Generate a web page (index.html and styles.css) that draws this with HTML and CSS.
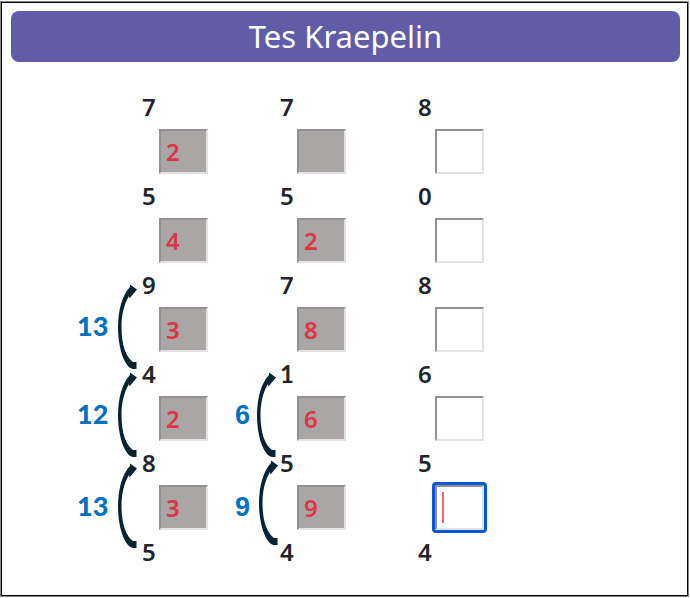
FILE: index.html
```
<!DOCTYPE html>
<html lang="id">
<head>
<meta charset="utf-8">
<title>Tes Kraepelin</title>
<link rel="stylesheet" href="styles.css">
</head>
<body>
<main class="frame">
  <h1 class="banner">Tes Kraepelin</h1>
  <form class="board">
    <div class="column">
      <span class="number">7</span><input class="answer filled" aria-label="7 + 5" value="2">
      <span class="number">5</span><input class="answer filled" aria-label="5 + 9" value="4">
      <span class="number">9</span><input class="answer filled" aria-label="9 + 4" value="3">
      <span class="number">4</span><input class="answer filled" aria-label="4 + 8" value="2">
      <span class="number">8</span><input class="answer filled" aria-label="8 + 5" value="3">
      <span class="number">5</span>
    </div>
    <div class="column">
      <span class="number">7</span><input class="answer filled" aria-label="7 + 5" value="">
      <span class="number">5</span><input class="answer filled" aria-label="5 + 7" value="2">
      <span class="number">7</span><input class="answer filled" aria-label="7 + 1" value="8">
      <span class="number one">1</span><input class="answer filled" aria-label="1 + 5" value="6">
      <span class="number">5</span><input class="answer filled" aria-label="5 + 4" value="9">
      <span class="number">4</span>
    </div>
    <div class="column">
      <span class="number">8</span><input class="answer" aria-label="8 + 0">
      <span class="number">0</span><input class="answer" aria-label="0 + 8">
      <span class="number">8</span><input class="answer" aria-label="8 + 6">
      <span class="number">6</span><input class="answer" aria-label="6 + 5">
      <span class="number">5</span><input class="answer active" aria-label="5 + 4">
      <span class="number">4</span>
    </div>
    <svg class="notes" width="280" height="510" viewBox="0 0 280 510">
      <defs>
        <path id="arc" d="M19 5.500 L12 0.500 L12 3 C4 11 0 27 0 43 C0 65 7 84 15 85 L18.500 85 L18.500 78 L15 78 C8 73 3.500 61 3.500 43 C3.500 31 6 20 11 12 L11.500 14.500 Z"/>
      </defs>
      <g class="arcs">
        <use href="#arc" x="116" y="199"/>
        <use href="#arc" x="116" y="287"/>
        <use href="#arc" x="116" y="378"/>
        <use href="#arc" x="255" y="287"/>
        <use href="#arc" x="257" y="375"/>
      </g>
      <g class="sums">
        <text class="pair" x="75" y="251">13</text>
        <text class="pair" x="75" y="339">12</text>
        <text class="pair" x="75" y="431">13</text>
        <text x="233" y="339">6</text>
        <text x="233" y="431">9</text>
      </g>
    </svg>
  </form>
</main>
</body>
</html>
```
FILE: styles.css
```
* {
  box-sizing: border-box;
}

body {
  margin: 0;
  background: #fff;
  font-family: "Noto Sans", sans-serif;
}

.frame {
  margin: 2px 2px 2px 1px;
  padding: 8px 7px 21px 9px;
  border: 1px solid #000;
  box-shadow: 0 0 0 1px #888;
}

.banner {
  margin: 0;
  border-radius: 8px;
  background: #605ca8;
  color: #fff;
  font-size: 31px;
  font-weight: 400;
  line-height: 51px;
  text-align: center;
}

.board {
  position: relative;
  display: grid;
  grid-template-columns: repeat(3, 138px);
  margin: 23px -7px 0 -9px;
  padding-left: 140px;
}

.column {
  display: flex;
  flex-direction: column;
  align-items: flex-start;
}

.number {
  height: 44px;
  color: #212529;
  font-size: 24px;
  font-weight: 600;
  line-height: 44px;
}

.number.one {
  font-family: Lato, sans-serif;
  font-weight: 700;
}

.answer {
  width: 49px;
  height: 45px;
  margin: 0 0 0 17px;
  padding: 0 5px;
  border: 2px solid;
  border-color: #929090 #e3e2e2 #e3e2e2 #929090;
  border-radius: 0;
  background-color: #fff;
  color: #dc3545;
  font-family: inherit;
  font-size: 24px;
  font-weight: 600;
}

.filled {
  background-color: #aaa6a5;
}

.active {
  outline: 3px solid #0558d6;
  outline-offset: 0;
  border-radius: 1px;
  background: linear-gradient(#e46a78, #e46a78) 5px 50% / 2px 31px no-repeat #fff;
}

.notes {
  position: absolute;
  top: 0;
  left: 0;
  pointer-events: none;
}

.arcs {
  fill: #042433;
}

.sums {
  fill: #0070c0;
  font-family: "Liberation Sans", sans-serif;
  font-size: 27px;
  font-weight: 700;
}

.pair {
  font-family: Lato, sans-serif;
  font-weight: 900;
}
```
